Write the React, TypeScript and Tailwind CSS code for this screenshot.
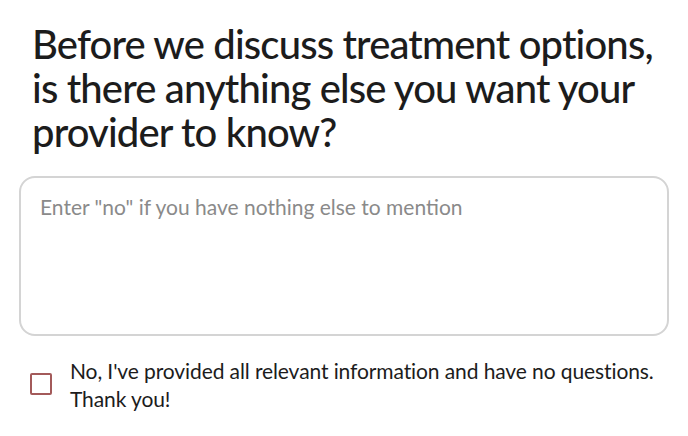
import React, { useState } from 'react';

export default function App() {
  const [checked, setChecked] = useState(false);

  return (
    <div className="min-h-[436px] w-[688px] bg-white font-['Lato','Noto_Sans',sans-serif] text-[#1c1c1c]">
      <div className="px-[19px] pt-[22px]">
        <h1 className="pl-[13px] text-[40px] font-medium leading-[44px] tracking-[-0.85px]">
          Before we discuss treatment options, is there anything else you want your provider to know?
        </h1>

        <textarea
          placeholder={'Enter "no" if you have nothing else to mention'}
          className="mt-[22px] block h-[160px] w-[650px] resize-none rounded-[16px] border-2 border-[#d4d4d4] px-[19px] pt-[15px] text-[21px] leading-[28px] outline-none placeholder:text-[#8a8a8a]"
        />

        <label className="mt-[21px] flex cursor-pointer items-start gap-[18px] pl-[11px]">
          <span className="flex h-[54px] items-center">
            <input
              type="checkbox"
              checked={checked}
              onChange={(e) => setChecked(e.target.checked)}
              className="h-[22px] w-[22px] shrink-0 appearance-none rounded-[2px] border-2 border-[#a35a5a] bg-white checked:bg-[#a35a5a]"
            />
          </span>
          <span className="text-[21px] leading-[28px] tracking-[-0.1px]">
            No, I've provided all relevant information and have no questions. Thank you!
          </span>
        </label>
      </div>
    </div>
  );
}
